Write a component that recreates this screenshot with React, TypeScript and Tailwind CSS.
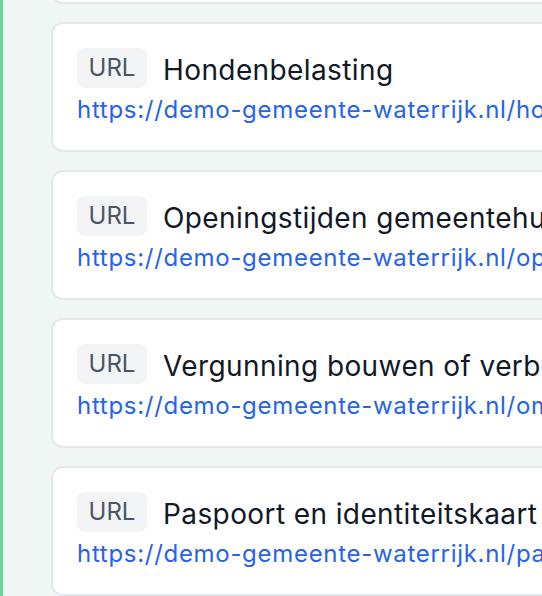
import React from "react";

const items = [
  { title: "Hondenbelasting", url: "https://demo-gemeente-waterrijk.nl/hondenbelasting" },
  { title: "Openingstijden gemeentehuis", url: "https://demo-gemeente-waterrijk.nl/openingstijden" },
  { title: "Vergunning bouwen of verbouwen", url: "https://demo-gemeente-waterrijk.nl/omgevingsvergunning" },
  { title: "Paspoort en identiteitskaart aanvragen", url: "https://demo-gemeente-waterrijk.nl/paspoort" },
];

export default function App() {
  return (
    <div
      className="h-[596px] w-[542px] overflow-hidden bg-[#eff6f3] border-l-[3px] border-[#6fd3a0]"
      style={{ fontFamily: "Inter, 'Noto Sans', sans-serif" }}
    >
      <div className="flex flex-col gap-[18px] pl-[48px] -mt-[126px] w-[1100px]">
        <div className="rounded-[12px] border-2 border-[#e4e7eb] bg-white h-[130px]" />
        {items.map((it) => (
          <div
            key={it.title}
            className="rounded-[12px] border-2 border-[#e4e7eb] bg-white p-6 h-[130px]"
          >
            <div className="flex items-center gap-4 h-10">
              <span className="flex h-10 w-[70px] items-center justify-center rounded-lg bg-[#f3f4f6] text-[24px] text-[#4b5563]">
                URL
              </span>
              <span className="pt-[4px] text-[28px] leading-9 tracking-[0.4px] text-[#111827] whitespace-nowrap">{it.title}</span>
            </div>
            <div className="mt-1.5 text-[24px] leading-8 tracking-[0.7px] text-[#2563eb] whitespace-nowrap">
              {it.url}
            </div>
          </div>
        ))}
      </div>
    </div>
  );
}
